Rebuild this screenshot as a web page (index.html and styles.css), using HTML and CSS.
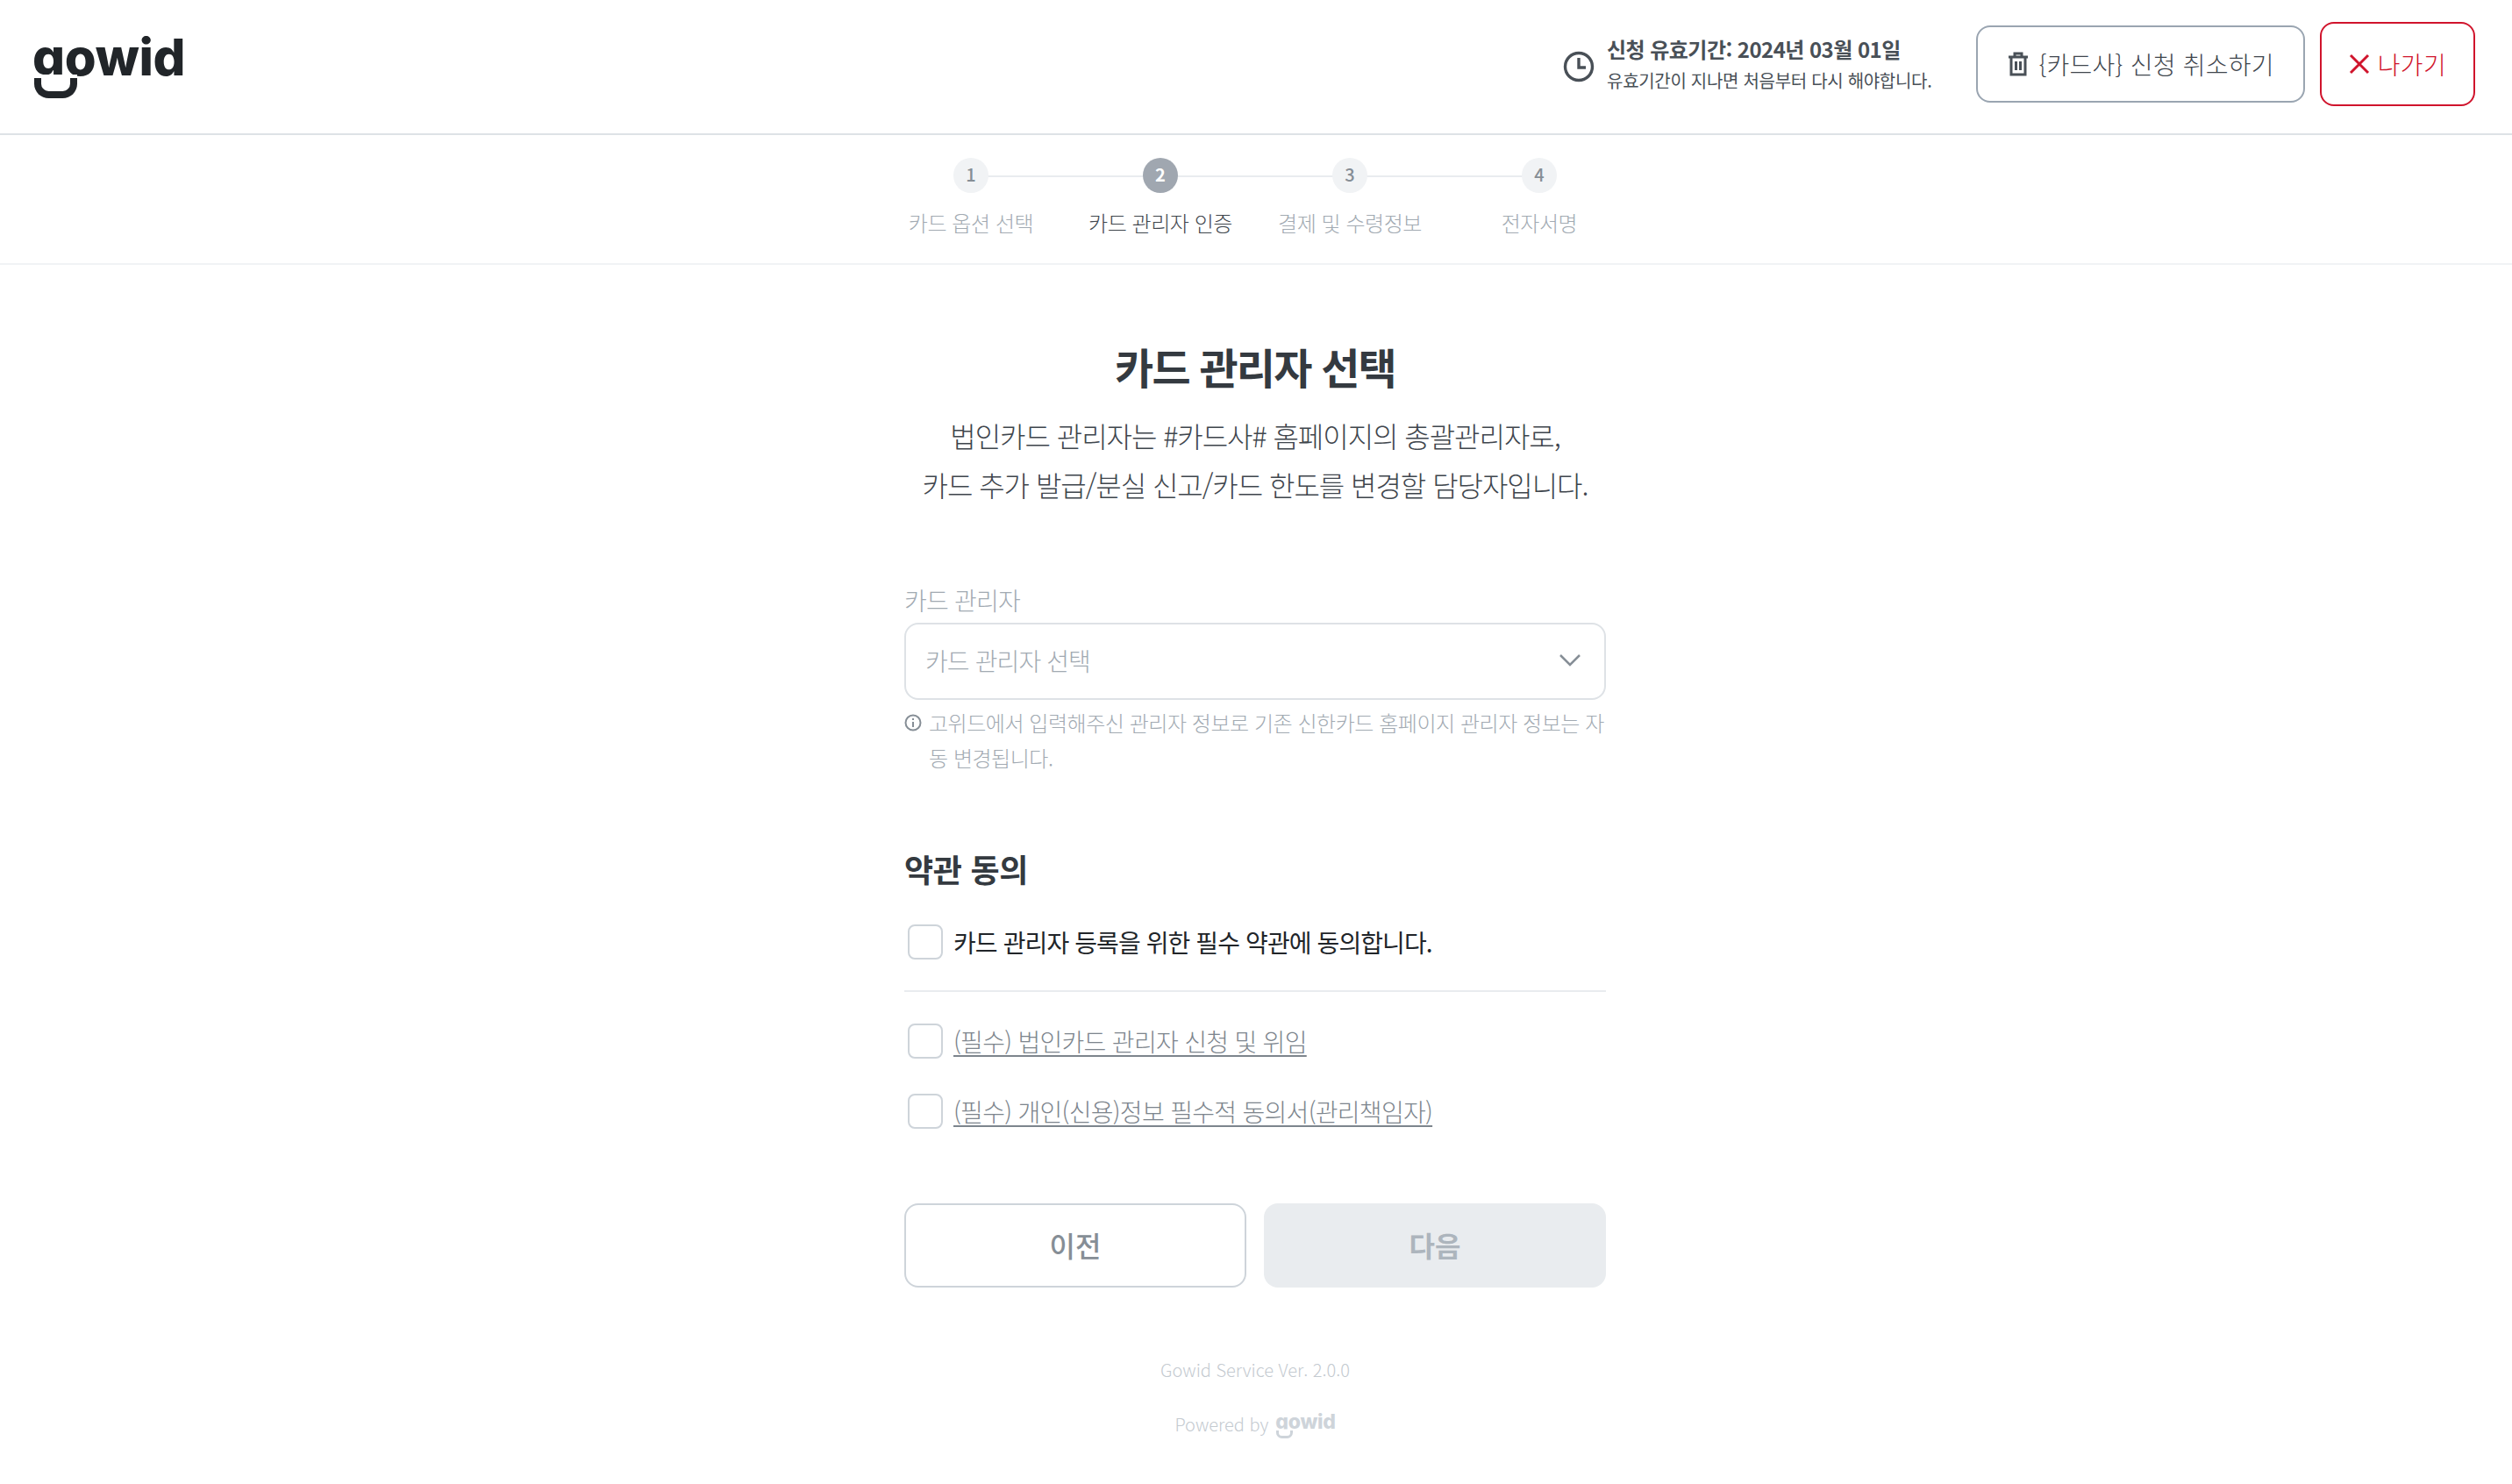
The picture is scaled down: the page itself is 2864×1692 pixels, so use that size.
FILE: index.html
```html
<!DOCTYPE html>
<html lang="ko">
<head>
    <meta charset="UTF-8">
    <title>카드 관리자 선택</title>
    <link rel="stylesheet" href="styles.css">
</head>
<body>
    <header class="header">
        <div class="logo">gowid</div>
        <div class="header-right">
            <div class="expiry">
                <svg class="clock-icon" width="36" height="36" viewBox="0 0 36 36" fill="none" stroke="#495057" stroke-width="3.4">
                    <circle cx="18" cy="18" r="15.5"/>
                    <polyline points="18,8 18,19 26,19"/>
                </svg>
                <div class="expiry-text">
                    <div class="expiry-title">신청 유효기간: 2024년 03월 01일</div>
                    <div class="expiry-sub">유효기간이 지나면 처음부터 다시 해야합니다.</div>
                </div>
            </div>
            <button class="cancel-button">
                <svg width="26" height="30" viewBox="0 0 26 30" fill="none" stroke="#495057" stroke-width="3">
                    <path d="M2 7h22M9 7V3h8v4M5 7v20h16V7M10.500 12v10M15.500 12v10"/>
                </svg>
                {카드사} 신청 취소하기
            </button>
            <button class="exit-button">
                <svg width="24" height="24" viewBox="0 0 24 24" fill="none" stroke="#d0142c" stroke-width="3">
                    <path d="M2 2l20 20M22 2L2 22"/>
                </svg>
                나가기
            </button>
        </div>
    </header>

    <nav class="stepper">
        <div class="step">
            <div class="step-circle">1</div>
            <div class="step-label">카드 옵션 선택</div>
        </div>
        <div class="step active">
            <div class="step-circle">2</div>
            <div class="step-label">카드 관리자 인증</div>
        </div>
        <div class="step">
            <div class="step-circle">3</div>
            <div class="step-label">결제 및 수령정보</div>
        </div>
        <div class="step">
            <div class="step-circle">4</div>
            <div class="step-label">전자서명</div>
        </div>
    </nav>

    <main class="content">
        <h1 class="title">카드 관리자 선택</h1>
        <p class="subtitle">법인카드 관리자는 #카드사# 홈페이지의 총괄관리자로,<br>카드 추가 발급/분실 신고/카드 한도를 변경할 담당자입니다.</p>

        <div class="form">
            <div class="field-label">카드 관리자</div>
            <div class="select">
                <span>카드 관리자 선택</span>
                <svg width="26" height="16" viewBox="0 0 26 16" fill="none" stroke="#868e96" stroke-width="2.500">
                    <polyline points="2,2 13,13 24,2"/>
                </svg>
            </div>
            <div class="helper">
                <svg class="info-icon" width="20" height="20" viewBox="0 0 20 20" fill="none" stroke="#868e96" stroke-width="2">
                    <circle cx="10" cy="10" r="8.500"/>
                    <path d="M10 9v6M10 5v2"/>
                </svg>
                <span>고위드에서 입력해주신 관리자 정보로 기존 신한카드 홈페이지 관리자 정보는 자동 변경됩니다.</span>
            </div>

            <h2 class="section-title">약관 동의</h2>
            <label class="check-row check-all">
                <span class="checkbox"></span>
                <span>카드 관리자 등록을 위한 필수 약관에 동의합니다.</span>
            </label>
            <div class="divider"></div>
            <label class="check-row">
                <span class="checkbox"></span>
                <span class="terms-link">(필수) 법인카드 관리자 신청 및 위임</span>
            </label>
            <label class="check-row">
                <span class="checkbox"></span>
                <span class="terms-link">(필수) 개인(신용)정보 필수적 동의서(관리책임자)</span>
            </label>

            <div class="actions">
                <button class="prev-button">이전</button>
                <button class="next-button" disabled>다음</button>
            </div>
        </div>

        <footer class="footer">
            <div class="version">Gowid Service Ver. 2.0.0</div>
            <div class="powered">Powered by <span class="logo logo-small">gowid</span></div>
        </footer>
    </main>
</body>
</html>
```

FILE: styles.css
```css
* {
    box-sizing: border-box;
}

body {
    margin: 0;
    background-color: #fff;
    font-family: "Noto Sans CJK KR", "Noto Sans", sans-serif;
    font-weight: 300;
    color: #212529;
}

button {
    font-family: inherit;
    font-weight: inherit;
    background: none;
    cursor: pointer;
}

.header {
    display: flex;
    justify-content: space-between;
    align-items: center;
    height: 154px;
    padding: 0 42px 6px 37px;
    border-bottom: 2px solid #dee2e6;
}

.logo {
    position: relative;
    font-family: Inter, sans-serif;
    font-size: 58px;
    font-weight: 800;
    letter-spacing: -0.3px;
    line-height: 1;
    color: #212529;
    margin-top: -16px;
}

/* the smile under the g of the wordmark */
.logo::after {
    content: "";
    position: absolute;
    top: 0.92em;
    left: 0.035em;
    width: 0.57em;
    height: 0.26em;
    background-color: #fff;
    border: 0.155em solid currentColor;
    border-top: none;
    border-radius: 0 0 0.285em 0.285em;
    box-shadow: 0 -0.07em 0 #fff;
}

.header-right {
    display: flex;
    align-items: center;
}

.expiry {
    display: flex;
    align-items: center;
    gap: 14px;
    margin-right: 51px;
}

.clock-icon {
    margin-top: 6px;
}

.expiry-text {
    margin-top: 2px;
}

.expiry-title {
    font-size: 24px;
    font-weight: 700;
    letter-spacing: -0.55px;
    line-height: 36px;
    color: #495057;
}

.expiry-sub {
    font-size: 20px;
    font-weight: 400;
    line-height: 36px;
    letter-spacing: -0.3px;
    color: #495057;
}

.cancel-button {
    display: flex;
    align-items: center;
    gap: 10px;
    height: 88px;
    padding: 0 33px;
    border: 2px solid #9aa5b1;
    border-radius: 16px;
    font-size: 28px;
    letter-spacing: 0.25px;
    color: #3f464d;
}

.exit-button {
    display: flex;
    align-items: center;
    gap: 9px;
    height: 96px;
    margin-left: 17px;
    padding: 0 31px;
    border: 2px solid #d0142c;
    border-radius: 16px;
    font-size: 28px;
    letter-spacing: 0.3px;
    color: #d0142c;
}

.stepper {
    display: flex;
    justify-content: center;
    height: 148px;
    padding: 26px 2px 0 0;
    border-bottom: 2px solid #f1f3f5;
}

.step {
    position: relative;
    display: flex;
    flex-direction: column;
    align-items: center;
    width: 216px;
}

/* connector to the next step */
.step:not(:last-child)::after {
    content: "";
    position: absolute;
    top: 20px;
    left: 50%;
    width: 100%;
    height: 2px;
    background-color: #e9ecef;
}

.step-circle {
    position: relative;
    z-index: 1;
    display: flex;
    justify-content: center;
    align-items: center;
    width: 40px;
    height: 40px;
    padding-bottom: 4px;
    border-radius: 50%;
    background-color: #f1f3f5;
    font-size: 20px;
    font-weight: 500;
    color: #868e96;
}

.step-label {
    margin-top: 16px;
    font-size: 24px;
    line-height: 36px;
    letter-spacing: -0.45px;
    color: #a2aab2;
    white-space: nowrap;
}

.step.active .step-circle {
    background-color: #a0a7b0;
    font-weight: 700;
    color: #fff;
}

.step.active .step-label {
    color: #3f464d;
}

.content {
    display: flex;
    flex-direction: column;
    align-items: center;
    padding-right: 2px;
}

.title {
    margin: 83px 0 0;
    font-size: 48px;
    font-weight: 700;
    line-height: 64px;
    letter-spacing: -1.8px;
    color: #343a40;
}

.subtitle {
    margin: 19px 0 0;
    font-size: 32px;
    line-height: 56px;
    letter-spacing: -1.05px;
    text-align: center;
    color: #3f464d;
}

.form {
    width: 800px;
    margin-top: 84px;
}

.field-label {
    font-size: 28px;
    line-height: 40px;
    letter-spacing: -0.8px;
    color: #a2aab2;
}

.select {
    display: flex;
    justify-content: space-between;
    align-items: center;
    height: 88px;
    margin-top: 6px;
    padding: 0 26px 2px 22px;
    border: 2px solid #dee2e6;
    border-radius: 16px;
    font-size: 28px;
    letter-spacing: -0.9px;
    color: #a2aab2;
}

.helper {
    display: flex;
    gap: 8px;
    margin-top: 6px;
    font-size: 24px;
    line-height: 40px;
    letter-spacing: -0.46px;
    color: #a2aab2;
    word-break: break-all;
}

.info-icon {
    flex-shrink: 0;
    margin-top: 10px;
}

.section-title {
    margin: 81px 0 0;
    font-size: 36px;
    font-weight: 700;
    line-height: 50px;
    letter-spacing: -0.3px;
    color: #343a40;
}

.check-row {
    display: flex;
    align-items: center;
    gap: 12px;
    height: 40px;
    margin-top: 40px;
    padding-left: 4px;
    font-size: 28px;
    letter-spacing: -0.9px;
}

.check-all {
    margin-top: 39px;
    font-weight: 400;
}

.checkbox {
    flex-shrink: 0;
    width: 40px;
    height: 40px;
    border: 2px solid #ced4da;
    border-radius: 8px;
}

.terms-link {
    letter-spacing: -0.7px;
    color: #7d858d;
    text-decoration: underline;
    text-underline-offset: 4px;
}

.divider {
    height: 2px;
    margin-top: 35px;
    background-color: #e9ecef;
}

.divider + .check-row {
    margin-top: 36px;
}

.actions {
    display: grid;
    grid-template-columns: 1fr 1fr;
    gap: 20px;
    margin-top: 85px;
}

.prev-button,
.next-button {
    height: 96px;
    padding-bottom: 4px;
    border-radius: 16px;
    font-size: 32px;
    font-weight: 500;
}

.prev-button {
    border: 2px solid #ced4da;
    color: #868e96;
}

.next-button {
    border: none;
    background-color: #e9ecef;
    color: #adb5bd;
    font-weight: 700;
    cursor: default;
}

.footer {
    display: flex;
    flex-direction: column;
    align-items: center;
    gap: 28px;
    margin-top: 77px;
    padding-bottom: 50px;
    font-size: 20px;
    line-height: 34px;
    color: #c4cad0;
}

.powered {
    display: flex;
    align-items: center;
    gap: 8px;
}

.logo-small {
    font-size: 23px;
    letter-spacing: -0.3px;
    color: #ced4da;
    margin-top: -6px;
}
```
